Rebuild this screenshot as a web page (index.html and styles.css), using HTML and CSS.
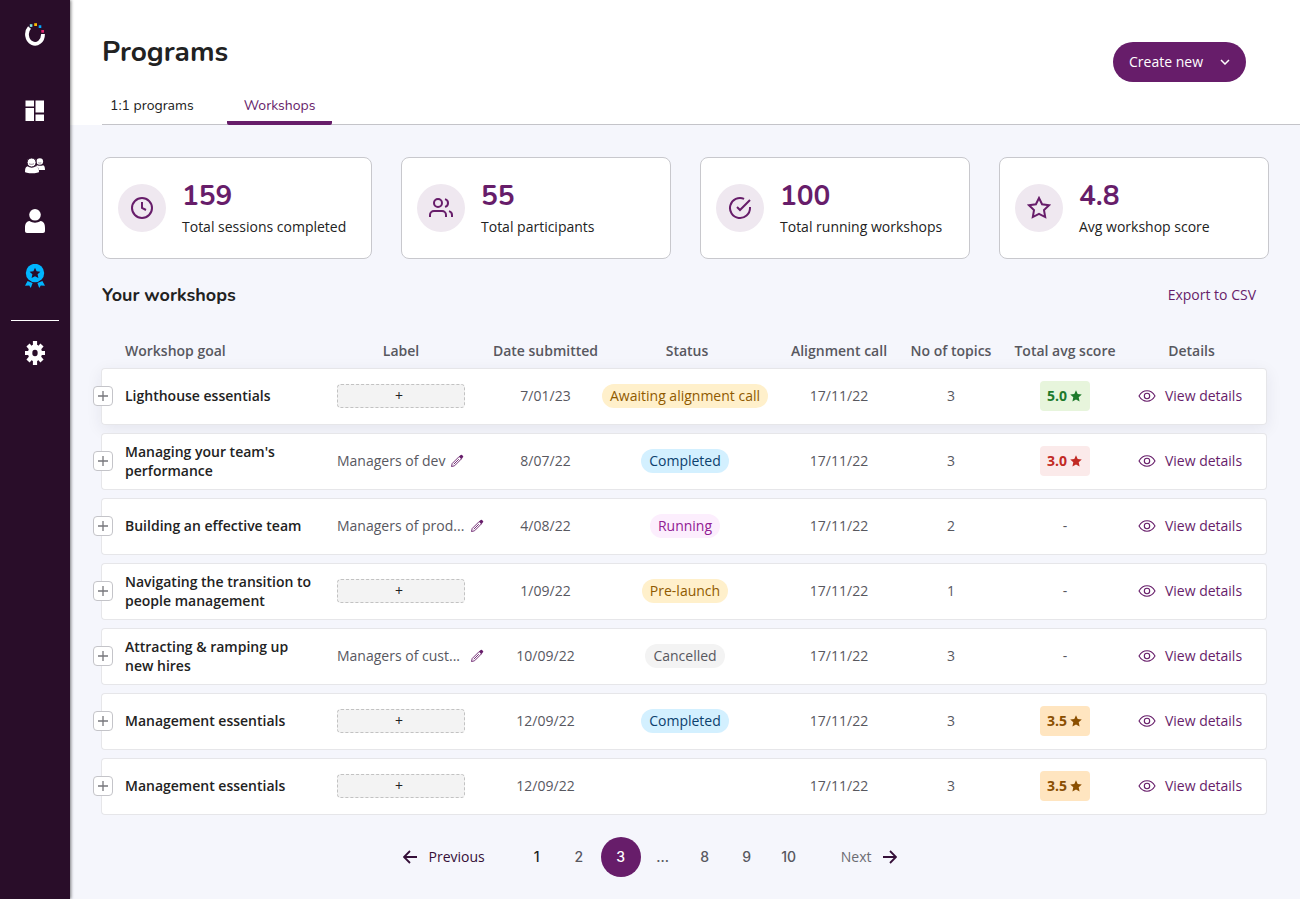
FILE: index.html
```html
<!DOCTYPE html>
<html lang="en">
<head>
  <meta charset="UTF-8" />
  <meta name="viewport" content="width=device-width, initial-scale=1.0"/>
  <title>Programs</title>
  <link rel="stylesheet" href="styles.css">
</head>
<body>
  <!-- Shared icons -->
  <svg class="sprite" aria-hidden="true">
    <symbol id="plus" viewBox="0 0 12 12"><path d="M6 1v10M1 6h10" fill="none" stroke="currentColor" stroke-width="1.3"/></symbol>
    <symbol id="pencil" viewBox="0 0 14 14"><path d="M1.500 12.500l.7-3 7-7 2.300 2.300-7 7zM3.800 10.200l5-5" fill="none" stroke="currentColor" stroke-width=".9" stroke-linejoin="round"/><path d="M9 2.600l1.700-1.600a.9.9 0 0 1 1.300 0l1 1a.9.9 0 0 1 0 1.300L11.400 5z" fill="currentColor"/></symbol>
    <symbol id="eye" viewBox="0 0 18 14"><path d="M1 7c2-3.400 4.800-5.200 8-5.200S15 3.600 17 7c-2 3.400-4.800 5.200-8 5.200S3 10.400 1 7z" fill="none" stroke="currentColor" stroke-width="1.100"/><circle cx="9" cy="7" r="2.700" fill="none" stroke="currentColor" stroke-width="1.100"/></symbol>
    <symbol id="star" viewBox="0 0 12 12"><path d="M6 .3l1.700 3.800 4.100.4-3.100 2.800.9 4.200L6 9.400l-3.600 2.100.9-4.200L.2 4.500l4.100-.4z" fill="currentColor"/></symbol>
  </svg>

  <aside class="sidebar">
    <a href="#" class="logo" aria-label="Home">
      <svg width="20" height="24" viewBox="0 0 20 24">
        <path d="M4.500 5.400A8 9.500 0 1 0 18 12" fill="none" stroke="#fff" stroke-width="3.800"/>
        <path d="M4.800 2.200h2.600v2.700H4.800z" fill="#7fe3e0"/>
        <path d="M9.200 1.200H12V4H9.200z" fill="#fbb900"/>
        <path d="M13.700 3.300h2.600v2.800h-2.600z" fill="#00a8ff"/>
        <path d="M16.300 8h2.700v2.700h-2.700z" fill="#e2256f"/>
      </svg>
    </a>
    <nav class="side-nav" aria-label="Main">
      <a href="#" aria-label="Dashboard">
        <svg width="20" height="24" viewBox="0 0 20 24" fill="currentColor"><path d="M.500 1.500H9v6H.500zM10.500 1.500h8.500v12h-8.500zM.500 9H9v13H.500zM10.500 15.500h8.500V22h-8.500z"/></svg>
      </a>
      <a href="#" aria-label="Teams">
        <svg width="20" height="24" viewBox="0 0 20 24" fill="currentColor"><circle cx="14.800" cy="7.500" r="3.300"/><path d="M12 11.200c2.500 1 5 .5 6 0 1.500.5 2 2 2 4.800h-6c-.2-2-1-3-3-3.500z"/><circle cx="6.600" cy="8.500" r="4.500" stroke="#290d29" stroke-width="1"/><path d="M2.500 12.300c2.500 1.800 6 1.800 8.500 0 2.500.5 3 2.700 3 5.700 0 1-6 1.300-7 1.300s-7-.3-7-1.300c0-3.300.5-5.200 2.500-5.700z"/><path d="M4 9.700c1.500.8 3.500.8 5 0M13.300 8.800c1 .4 2 .4 3 0" fill="none" stroke="#290d29" stroke-opacity=".6" stroke-width=".8"/></svg>
      </a>
      <a href="#" aria-label="People">
        <svg width="20" height="24" viewBox="0 0 20 24" fill="currentColor"><circle cx="10" cy="5.800" r="5.800"/><path d="M4.500 12c3.500 2.300 7.500 2.300 11 0C19 12.500 20 15 20 19v3c0 1.300-.8 2-2 2H2c-1.200 0-2-.7-2-2v-3c0-4 1-6.500 4.500-7z"/></svg>
      </a>
      <a href="#" class="current" aria-label="Programs" aria-current="page">
        <svg width="20" height="24" viewBox="0 0 20 24" fill="currentColor"><circle cx="10" cy="9" r="9.200"/><path d="M10 3.800l1.600 3.500 3.800.4-2.800 2.600.8 3.800L10 12.200l-3.400 1.900.8-3.800-2.800-2.600 3.800-.4z" fill="#290d29"/><path d="M2.600 17l5 2-1.800 5-1.600-2.600-4.200.4zM17.400 17l-5 2 1.800 5 1.600-2.600 4.200.4z"/></svg>
      </a>
    </nav>
    <hr class="side-line">
    <a href="#" aria-label="Settings">
      <svg width="20" height="24" viewBox="0 0 20 24"><g stroke="currentColor" stroke-width="4.200" fill="none"><path d="M10 0v24M0 12h20M3 4l14 16M17 4L3 20"/></g><ellipse cx="10" cy="12" rx="7" ry="8.500" fill="currentColor"/><ellipse cx="10" cy="12" rx="2.700" ry="3.300" fill="#290d29"/></svg>
    </a>
  </aside>

  <div class="page">
    <header class="top">
      <div class="title-row">
        <h1>Programs</h1>
        <button type="button" class="create">Create new
          <svg width="10" height="6" viewBox="0 0 10 6"><path d="M1 1l4 4 4-4" fill="none" stroke="currentColor" stroke-width="1.500"/></svg>
        </button>
      </div>
      <nav class="tabs" aria-label="Program type">
        <a href="#">1:1 programs</a>
        <a href="#" class="active" aria-current="page">Workshops</a>
      </nav>
    </header>

    <main>
      <section class="stats">
        <div class="card">
          <span class="bubble"><svg viewBox="0 0 24 24"><circle cx="12" cy="12" r="10"/><path d="M12 6v6l4 2"/></svg></span>
          <div class="figure"><strong>159</strong><p>Total sessions completed</p></div>
        </div>
        <div class="card">
          <span class="bubble"><svg viewBox="0 0 24 24"><path d="M17 21v-2a4 4 0 0 0-4-4H5a4 4 0 0 0-4 4v2"/><circle cx="9" cy="7" r="4"/><path d="M23 21v-2a4 4 0 0 0-3-3.870M16 3.130a4 4 0 0 1 0 7.750"/></svg></span>
          <div class="figure"><strong>55</strong><p>Total participants</p></div>
        </div>
        <div class="card">
          <span class="bubble"><svg viewBox="0 0 24 24"><path d="M22 11.080V12a10 10 0 1 1-5.930-9.140"/><path d="M22 4L12 14.010l-3-3"/></svg></span>
          <div class="figure"><strong>100</strong><p>Total running workshops</p></div>
        </div>
        <div class="card">
          <span class="bubble"><svg viewBox="0 0 24 24"><path d="M12 2l3.090 6.260L22 9.270l-5 4.870 1.180 6.880L12 17.770l-6.180 3.250L7 14.140 2 9.270l6.910-1.010z"/></svg></span>
          <div class="figure"><strong>4.8</strong><p>Avg workshop score</p></div>
        </div>
      </section>

      <div class="section-head">
        <h2>Your workshops</h2>
        <a href="#">Export to CSV</a>
      </div>

      <table class="workshops">
        <colgroup>
          <col class="c-goal"><col class="c-label"><col class="c-date"><col class="c-status">
          <col class="c-call"><col class="c-topics"><col class="c-score"><col class="c-details">
        </colgroup>
        <thead>
          <tr>
            <th scope="col" class="goal">Workshop goal</th>
            <th scope="col" class="label">Label</th>
            <th scope="col">Date submitted</th>
            <th scope="col">Status</th>
            <th scope="col">Alignment call</th>
            <th scope="col">No of topics</th>
            <th scope="col">Total avg score</th>
            <th scope="col" class="details">Details</th>
          </tr>
        </thead>
        <tbody>
          <tr class="raised">
            <td class="goal"><button type="button" class="expand" aria-label="Expand"><svg width="12" height="12"><use href="#plus"/></svg></button>Lighthouse essentials</td>
            <td class="label"><button type="button" class="add-label">+</button></td>
            <td>7/01/23</td>
            <td class="status"><span class="pill amber">Awaiting alignment call</span></td>
            <td>17/11/22</td>
            <td>3</td>
            <td><span class="score high">5.0 <svg width="12" height="12"><use href="#star"/></svg></span></td>
            <td class="details"><a href="#"><svg width="18" height="14"><use href="#eye"/></svg>View details</a></td>
          </tr>
          <tr>
            <td class="goal"><button type="button" class="expand" aria-label="Expand"><svg width="12" height="12"><use href="#plus"/></svg></button>Managing your team's performance</td>
            <td class="label"><div class="tag"><span>Managers of dev</span><button type="button" aria-label="Edit label"><svg width="14" height="14"><use href="#pencil"/></svg></button></div></td>
            <td>8/07/22</td>
            <td class="status"><span class="pill blue">Completed</span></td>
            <td>17/11/22</td>
            <td>3</td>
            <td><span class="score low">3.0 <svg width="12" height="12"><use href="#star"/></svg></span></td>
            <td class="details"><a href="#"><svg width="18" height="14"><use href="#eye"/></svg>View details</a></td>
          </tr>
          <tr>
            <td class="goal"><button type="button" class="expand" aria-label="Expand"><svg width="12" height="12"><use href="#plus"/></svg></button>Building an effective team</td>
            <td class="label"><div class="tag cut"><span>Managers of prod...</span><button type="button" aria-label="Edit label"><svg width="14" height="14"><use href="#pencil"/></svg></button></div></td>
            <td>4/08/22</td>
            <td class="status"><span class="pill pink">Running</span></td>
            <td>17/11/22</td>
            <td>2</td>
            <td>-</td>
            <td class="details"><a href="#"><svg width="18" height="14"><use href="#eye"/></svg>View details</a></td>
          </tr>
          <tr>
            <td class="goal"><button type="button" class="expand" aria-label="Expand"><svg width="12" height="12"><use href="#plus"/></svg></button>Navigating the transition to people management</td>
            <td class="label"><button type="button" class="add-label">+</button></td>
            <td>1/09/22</td>
            <td class="status"><span class="pill amber">Pre-launch</span></td>
            <td>17/11/22</td>
            <td>1</td>
            <td>-</td>
            <td class="details"><a href="#"><svg width="18" height="14"><use href="#eye"/></svg>View details</a></td>
          </tr>
          <tr>
            <td class="goal"><button type="button" class="expand" aria-label="Expand"><svg width="12" height="12"><use href="#plus"/></svg></button>Attracting &amp; ramping up new hires</td>
            <td class="label"><div class="tag cut"><span>Managers of cust...</span><button type="button" aria-label="Edit label"><svg width="14" height="14"><use href="#pencil"/></svg></button></div></td>
            <td>10/09/22</td>
            <td class="status"><span class="pill grey">Cancelled</span></td>
            <td>17/11/22</td>
            <td>3</td>
            <td>-</td>
            <td class="details"><a href="#"><svg width="18" height="14"><use href="#eye"/></svg>View details</a></td>
          </tr>
          <tr>
            <td class="goal"><button type="button" class="expand" aria-label="Expand"><svg width="12" height="12"><use href="#plus"/></svg></button>Management essentials</td>
            <td class="label"><button type="button" class="add-label">+</button></td>
            <td>12/09/22</td>
            <td class="status"><span class="pill blue">Completed</span></td>
            <td>17/11/22</td>
            <td>3</td>
            <td><span class="score mid">3.5 <svg width="12" height="12"><use href="#star"/></svg></span></td>
            <td class="details"><a href="#"><svg width="18" height="14"><use href="#eye"/></svg>View details</a></td>
          </tr>
          <tr>
            <td class="goal"><button type="button" class="expand" aria-label="Expand"><svg width="12" height="12"><use href="#plus"/></svg></button>Management essentials</td>
            <td class="label"><button type="button" class="add-label">+</button></td>
            <td>12/09/22</td>
            <td class="status"></td>
            <td>17/11/22</td>
            <td>3</td>
            <td><span class="score mid">3.5 <svg width="12" height="12"><use href="#star"/></svg></span></td>
            <td class="details"><a href="#"><svg width="18" height="14"><use href="#eye"/></svg>View details</a></td>
          </tr>
        </tbody>
      </table>

      <nav class="pager" aria-label="Pages">
        <a href="#" class="step prev"><svg width="14" height="14" viewBox="0 0 14 14"><path d="M14 7H1M7 1L1 7l6 6" fill="none" stroke="currentColor" stroke-width="1.800"/></svg>Previous</a>
        <div class="numbers">
          <a href="#" class="first">1</a>
          <a href="#">2</a>
          <a href="#" class="on" aria-current="page">3</a>
          <span>...</span>
          <a href="#">8</a>
          <a href="#">9</a>
          <a href="#">10</a>
        </div>
        <a href="#" class="step next">Next<svg width="14" height="14" viewBox="0 0 14 14"><path d="M0 7h13M7 1l6 6-6 6" fill="none" stroke="currentColor" stroke-width="1.800"/></svg></a>
      </nav>
    </main>
  </div>
</body>
</html>
```
FILE: styles.css
```css
* {
  box-sizing: border-box;
}

body {
  margin: 0;
  display: flex;
  min-height: 100vh;
  background: #f5f6fc;
  font-family: "Open Sans", sans-serif;
  font-size: 14px;
  line-height: 20px;
  color: #222;
}

a {
  color: #671d6a;
  text-decoration: none;
}

button {
  font: inherit;
  cursor: pointer;
}

svg {
  display: block;
  flex: none;
}

.sprite {
  position: absolute;
  width: 0;
  height: 0;
}

/* Sidebar */
.sidebar {
  flex: none;
  width: 70px;
  padding-top: 22px;
  display: flex;
  flex-direction: column;
  align-items: center;
  background: #290d29;
  box-shadow: 1px 0 3px rgba(0, 0, 0, 0.5);
  z-index: 1;
}

.sidebar a {
  color: #fff;
}

.sidebar a.current {
  color: #00b5ff;
}

.side-nav {
  display: flex;
  flex-direction: column;
  gap: 31px;
  margin-top: 53px;
}

.side-line {
  width: 48px;
  margin: 32px 0 20px;
  border: 0;
  border-top: 1px solid #fff;
}

/* Header */
.page {
  flex: 1;
  min-width: 0;
}

.top {
  padding: 32px 0 0 32px;
  background: #fff;
}

.title-row {
  display: flex;
  align-items: flex-start;
  justify-content: space-between;
  padding-right: 54px;
}

h1 {
  margin: 0;
  font-family: Nunito, "Open Sans", sans-serif;
  font-size: 28px;
  line-height: 40px;
}

.create {
  display: flex;
  align-items: center;
  gap: 17px;
  height: 40px;
  margin-top: 10px;
  padding: 0 16px;
  border: 0;
  border-radius: 20px;
  background: #671d6a;
  color: #fff;
}

.tabs {
  display: flex;
  gap: 25px;
  height: 43px;
  border-bottom: 1px solid #c4c4c9;
  font-family: Nunito, "Open Sans", sans-serif;
}

.tabs a {
  height: 43px;
  padding: 14px 8px 0;
  color: #222;
}

.tabs .active {
  padding: 14px 17px 0;
  color: #671d6a;
  background: linear-gradient(#671d6a, #671d6a) bottom / 100% 4px no-repeat;
  border-radius: 2px;
}

/* Stat cards */
main {
  padding: 32px 31px 20px 32px;
}

.stats {
  display: grid;
  grid-template-columns: repeat(4, 1fr);
  gap: 29px;
}

.card {
  display: flex;
  align-items: center;
  gap: 16px;
  height: 102px;
  padding: 0 15px;
  background: #fff;
  border: 1px solid #c8c8cd;
  border-radius: 8px;
}

.figure {
  padding-bottom: 4px;
}

.figure strong {
  display: block;
  font-family: Nunito, "Open Sans", sans-serif;
  font-size: 28px;
  line-height: 40px;
  color: #671d6a;
}

.figure p {
  margin: 1px 0 0;
}

.bubble {
  flex: none;
  display: grid;
  place-items: center;
  width: 48px;
  height: 48px;
  border-radius: 50%;
  background: #efe8f0;
}

.bubble svg {
  width: 24px;
  height: 24px;
  fill: none;
  stroke: #671d6a;
  stroke-width: 2;
}

.section-head {
  display: flex;
  align-items: center;
  justify-content: space-between;
  margin-top: 24px;
  padding-right: 13px;
}

h2 {
  margin: 0;
  font-family: Nunito, "Open Sans", sans-serif;
  font-size: 18px;
  line-height: 24px;
}

/* Workshops table */
.workshops {
  width: calc(100% - 1px);
  margin: 27px 0 0 -1px;
  table-layout: fixed;
  border-collapse: separate;
  border-spacing: 0 8px;
}

.c-goal { width: 236px; }
.c-label { width: 152px; }
.c-date { width: 113px; }
.c-status { width: 170px; }
.c-call { width: 134px; }
.c-topics { width: 90px; }
.c-score { width: 138px; }
.c-details { width: 133px; }

th {
  padding: 0;
  font-weight: 600;
  line-height: 18px;
  color: #58585f;
  white-space: nowrap;
}

th.goal {
  padding-left: 24px;
  text-align: left;
}

th.label {
  padding-right: 24px;
}

th.details {
  padding-right: 18px;
}

td {
  height: 57px;
  padding: 0 0 2px;
  background: #fff;
  border: solid #e6e6e9;
  border-width: 1px 0;
  text-align: center;
  color: #58585f;
}

td.goal {
  position: relative;
  padding: 0 20px 2px 23px;
  border-left-width: 1px;
  border-radius: 4px 0 0 4px;
  text-align: left;
  font-weight: 600;
  line-height: 19px;
  color: #222;
}

td.label {
  text-align: left;
}

td.status {
  padding-right: 4px;
}

td.details {
  padding-right: 20px;
  border-right-width: 1px;
  border-radius: 0 4px 4px 0;
}

.raised {
  border-radius: 4px;
  box-shadow: 0 4px 16px rgba(34, 34, 60, 0.08);
}

.expand {
  position: absolute;
  left: -9px;
  top: 17px;
  display: grid;
  place-items: center;
  width: 20px;
  height: 20px;
  padding: 0;
  background: #fff;
  border: 1px solid #c4c4c9;
  border-radius: 4px;
  color: #77777c;
}

.add-label {
  display: block;
  width: 128px;
  height: 24px;
  padding: 0 4px 0 0;
  background: #f3f3f3;
  border: 1px dashed #c2c2c2;
  border-radius: 4px;
  line-height: 20px;
  color: #222;
}

.tag {
  display: flex;
  align-items: center;
  gap: 5px;
  white-space: nowrap;
}

.tag.cut span {
  width: 128px;
}

.tag button {
  padding: 0;
  background: none;
  border: 0;
  color: #671d6a;
}

.pill {
  display: inline-block;
  padding: 2px 8px;
  border-radius: 12px;
  white-space: nowrap;
}

.amber { background: #fff0cb; color: #8f5a00; }
.blue { background: #d3f0ff; color: #0c416e; }
.pink { background: #fceefd; color: #912094; }
.grey { background: #f3f3f3; color: #58585f; }

.score {
  display: inline-flex;
  align-items: center;
  gap: 3px;
  height: 30px;
  padding: 0 8px 0 7px;
  border-radius: 4px;
  font-weight: 700;
  vertical-align: middle;
}

.high { background: #e7f5dc; color: #1d7a2b; }
.low { background: #fbeaea; color: #c22a24; }
.mid { background: #ffe5c0; color: #8b4f00; }

td.details a {
  display: flex;
  align-items: center;
  justify-content: center;
  gap: 9px;
  white-space: nowrap;
}

/* Pagination */
.pager {
  display: flex;
  align-items: center;
  justify-content: center;
  margin-top: 14px;
  padding-right: 71px;
}

.step {
  display: flex;
  align-items: center;
  gap: 12px;
}

.step svg {
  color: #350f38;
}

.prev { color: #350f38; }
.next { color: #6c6c73; }

.numbers {
  display: flex;
  gap: 2px;
  margin: 0 32px;
  font-family: Inter, sans-serif;
  font-weight: 500;
}

.numbers a,
.numbers span {
  width: 40px;
  height: 40px;
  border-radius: 50%;
  line-height: 40px;
  text-align: center;
  color: #58585f;
}

.numbers .first {
  color: #222;
}

.numbers .on {
  background: #671d6a;
  color: #fff;
}

@media (max-width: 1000px) {
  .stats {
    grid-template-columns: repeat(2, 1fr);
  }
}
```
